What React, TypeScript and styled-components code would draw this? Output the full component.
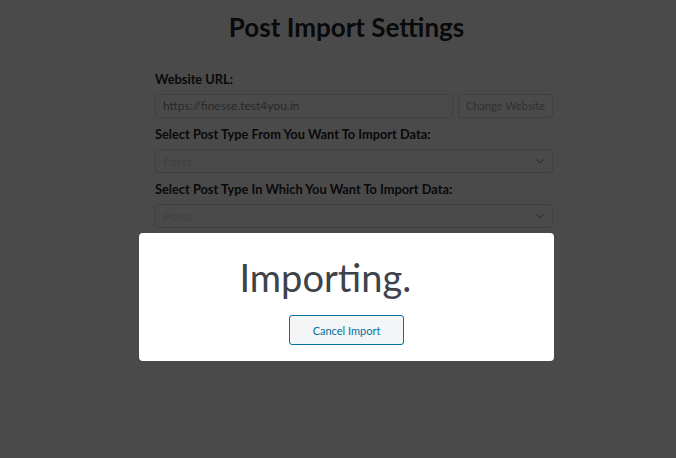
import React from "react"
import styled, { createGlobalStyle } from "styled-components"

const GlobalStyle = createGlobalStyle`
  html, body {
    margin: 0;
    padding: 0;
    background: #ffffff;
    font-family: Lato, "Open Sans", sans-serif;
  }
`

const Page = styled.div`
  width: 415px;
  margin-left: 139px;
  padding-top: 11px;
`

const Title = styled.h1`
  margin: 0 0 27px;
  text-align: center;
  font-size: 26px;
  line-height: 32px;
  font-weight: 700;
  color: #1d2327;
`

const Form = styled.div`
  display: flex;
  flex-direction: column;
  padding-left: 16px;
  width: 398px;
`

const Label = styled.label`
  font-size: 12.8px;
  line-height: 18px;
  font-weight: 700;
  color: #1d2327;
  margin-bottom: 6px;
`

const Row = styled.div`
  display: flex;
  gap: 5px;
  margin-bottom: 7px;
`

const Input = styled.div`
  flex: 1;
  height: 24px;
  box-sizing: border-box;
  border: 1px solid #dcdcde;
  border-radius: 3px;
  padding: 0 7px;
  font-size: 12px;
  line-height: 22px;
  color: #8c8f94;
`

const GhostButton = styled.div`
  width: 95px;
  height: 24px;
  box-sizing: border-box;
  border: 1px solid #dcdcde;
  border-radius: 3px;
  font-size: 11px;
  line-height: 22px;
  text-align: center;
  color: #a7aaad;
`

const Select = styled.div`
  display: flex;
  align-items: center;
  justify-content: space-between;
  height: 24px;
  box-sizing: border-box;
  border: 1px solid #dcdcde;
  border-radius: 3px;
  padding: 0 6px 0 7px;
  font-size: 12px;
  color: #dcdcde;
  margin-bottom: 7px;
`

const Overlay = styled.div`
  position: fixed;
  inset: 0;
  background: rgba(0, 0, 0, 0.71);
  padding: 233px 0 0 139px;
`

const Modal = styled.div`
  width: 415px;
  height: 128px;
  box-sizing: border-box;
  background: #ffffff;
  border-radius: 4px;
  display: flex;
  flex-direction: column;
  align-items: center;
  padding-top: 21px;
`

const Status = styled.div`
  width: 214px;
  font-size: 38px;
  line-height: 47px;
  color: #3c434a;
  text-align: left;
  margin-bottom: 14px;
`

const CancelButton = styled.button`
  width: 115px;
  height: 30px;
  border: 1px solid #0071a1;
  border-radius: 3px;
  background: #f3f5f6;
  color: #0071a1;
  font-family: inherit;
  font-size: 11px;
  cursor: pointer;
`

const Chevron = () => (
  <svg width="12" height="12" viewBox="0 0 12 12" fill="none">
    <path d="M2.5 4.5l3.5 3.5 3.5-3.5" stroke="#a7aaad" strokeWidth="1.1" />
  </svg>
)

export default function App() {
  return (
    <>
      <GlobalStyle />
      <Page>
        <Title>Post Import Settings</Title>
        <Form>
          <Label>Website URL:</Label>
          <Row>
            <Input>https://finesse.test4you.in</Input>
            <GhostButton>Change Website</GhostButton>
          </Row>
          <Label>Select Post Type From You Want To Import Data:</Label>
          <Select>
            Posts
            <Chevron />
          </Select>
          <Label>Select Post Type In Which You Want To Import Data:</Label>
          <Select>
            Posts
            <Chevron />
          </Select>
        </Form>
      </Page>
      <Overlay>
        <Modal>
          <Status>Importing.</Status>
          <CancelButton>Cancel Import</CancelButton>
        </Modal>
      </Overlay>
    </>
  )
}
